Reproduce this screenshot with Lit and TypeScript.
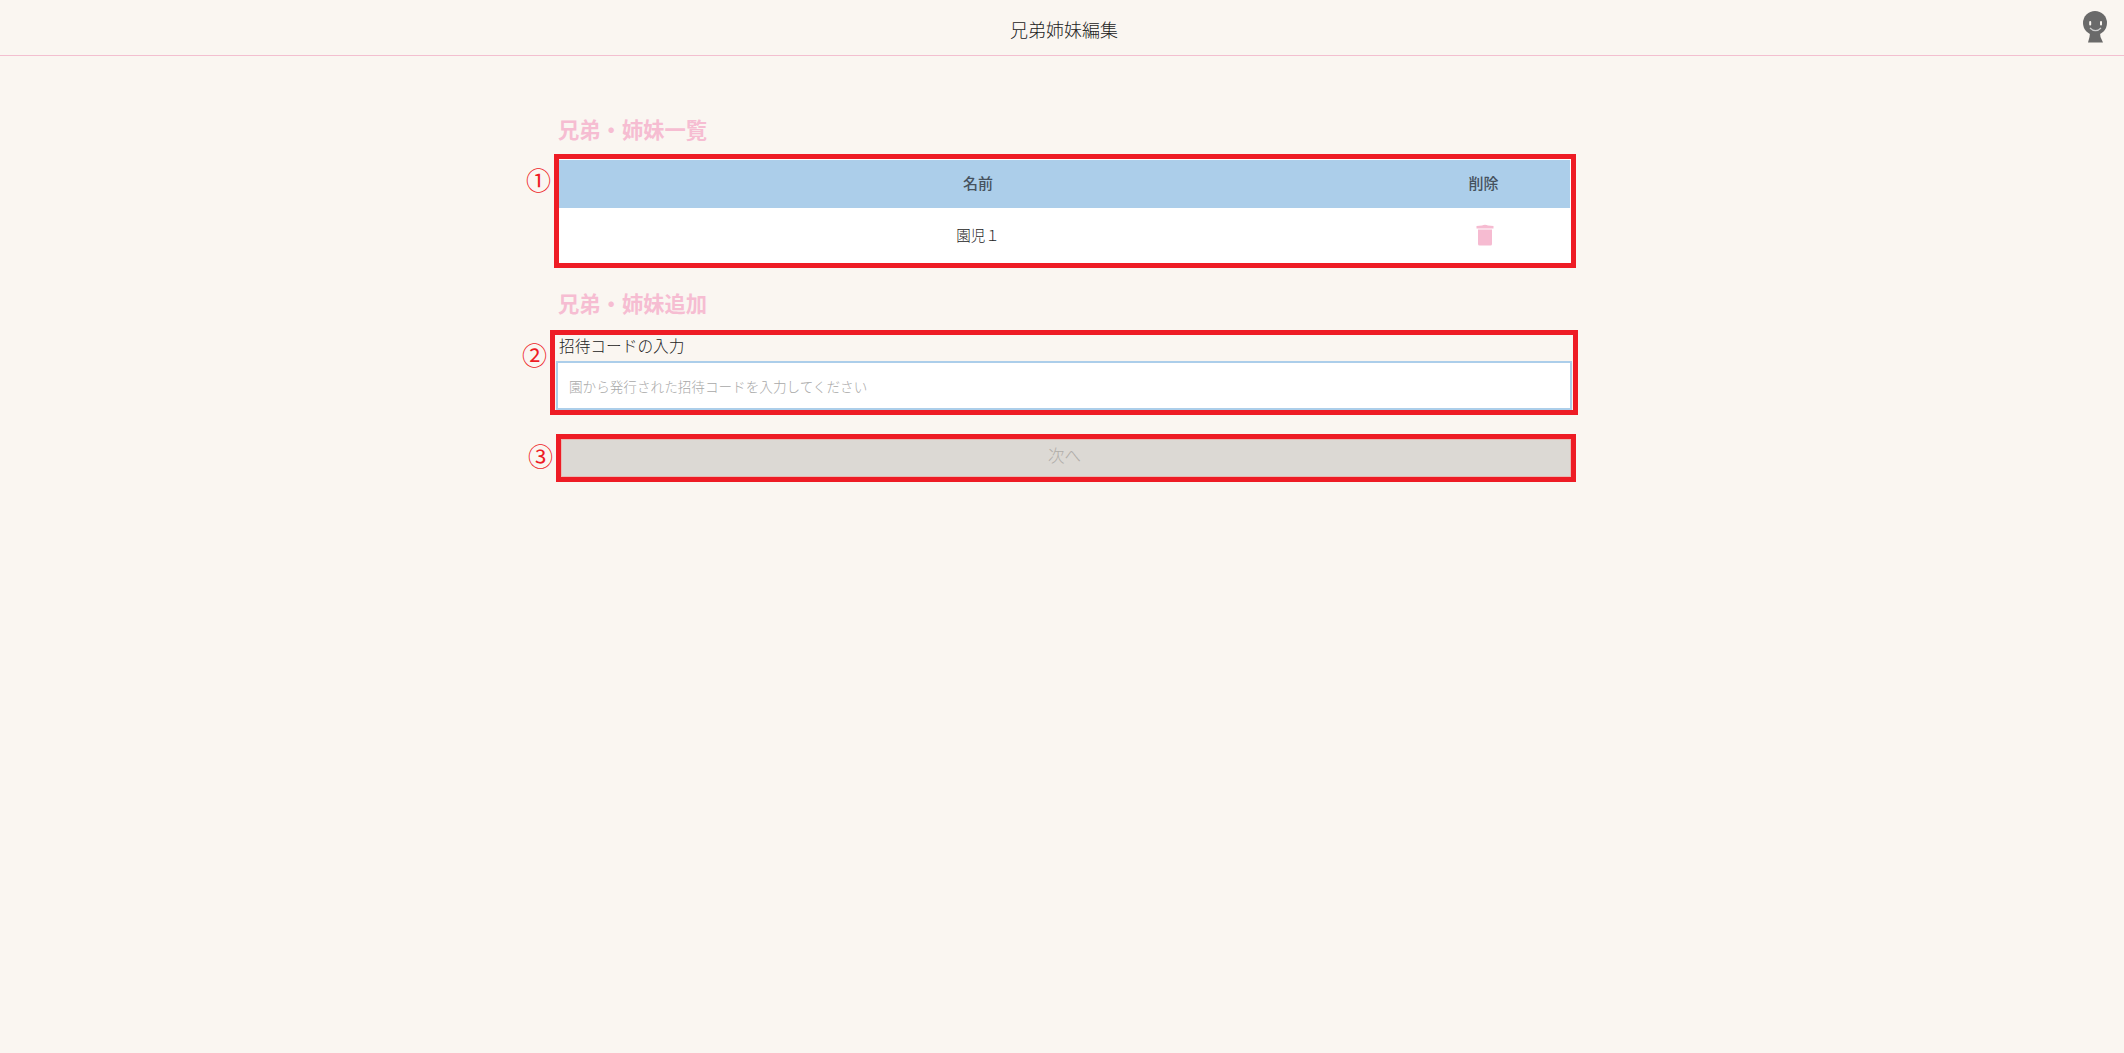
import { LitElement, html, css } from "lit";
import { customElement } from "lit/decorators.js";

@customElement("app-root")
export class AppRoot extends LitElement {
  static styles = css`
    :host {
      display: block;
      min-height: 1053px;
      background: #faf6f1;
      color: #222;
      font-family: "Noto Sans CJK JP", "Noto Sans", sans-serif;
      font-weight: 300;
    }
    .top {
      height: 56px;
      box-sizing: border-box;
      border-bottom: 1px solid #f3bfd0;
      display: flex;
      align-items: center;
      justify-content: center;
      position: relative;
      font-size: 18px;
      padding: 2px 0 0 4px;
    }
    .avatar {
      position: absolute;
      left: 2082px;
      top: 11px;
      width: 26px;
      height: 32px;
    }
    .main {
      width: 1012px;
      margin-left: 559px;
      display: flex;
      flex-direction: column;
    }
    h2 {
      margin: 0 0 0 -1px;
      font-size: 21.3px;
      font-weight: 700;
      line-height: 30px;
      color: #f6bdd2;
    }
    .h1st { margin-top: 58px; margin-bottom: 15px; }
    .h2nd { margin-top: 25px; margin-bottom: 17px; }
    .annotated { position: relative; }
    .frame {
      position: absolute;
      border: 5px solid #ee1c25;
      pointer-events: none;
    }
    .num {
      position: absolute;
      color: #ee1c25;
      font-size: 25px;
      line-height: 25px;
      font-weight: 400;
    }
    .table {
      background: #fff;
      padding: 1px 1px 0 0;
      height: 104px;
      box-sizing: border-box;
    }
    .row {
      display: grid;
      grid-template-columns: 838px 1fr;
      align-items: center;
      text-align: center;
      font-size: 14.5px;
    }
    .head {
      height: 48px;
      box-sizing: border-box;
      padding-bottom: 3px;
      background: #acceea;
      color: #46525e;
      font-weight: 500;
      font-size: 15px;
    }
    .body { height: 55px; box-sizing: border-box; padding-bottom: 3px; color: #222; }
    .trash { display: block; margin: 1px auto 0; width: 18px; height: 22px; transform: translateX(1px); }
    .label {
      font-size: 15.7px;
      line-height: 21px;
      height: 24px;
    }
    .field {
      margin: 2px 0 0 -3px;
      width: 1016px;
      height: 49px;
      box-sizing: border-box;
      border: 2px solid #acceea;
      background: #fff;
      display: flex;
      align-items: center;
      padding: 0 0 0 11px;
      font-size: 13.6px;
      color: #a8a8a8;
    }
    .btn-wrap { margin: 29px 0 0 2px; }
    .btn {
      width: 1010px;
      height: 38px;
      box-sizing: border-box;
      border: 1px solid #e8b9b4;
      padding: 0 3px 6px 0;
      background: #dcd9d4;
      color: #b0ada9;
      display: flex;
      align-items: center;
      justify-content: center;
      font-size: 16.5px;
    }
  `;

  render() {
    return html`
      <div class="top">
        兄弟姉妹編集
        <svg class="avatar" viewBox="0 0 26 32" aria-hidden="true">
          <circle cx="13" cy="12" r="12" fill="#6a6a6a" />
          <path fill="#6a6a6a" d="M8 22 H18 L18.5 26 L21 31.5 H6 L7.5 26 Z" />
          <rect x="7.2" y="10" width="2" height="4.5" rx="1" fill="#faf6f1" />
          <rect x="18" y="10" width="2" height="4.5" rx="1" fill="#faf6f1" />
          <path d="M8 17 Q13.5 22.5 19 17" fill="none" stroke="#cfcfcf" stroke-width="1.2" />
        </svg>
      </div>
      <div class="main">
        <h2 class="h1st">兄弟・姉妹一覧</h2>
        <div class="annotated">
          <div class="table">
            <div class="row head"><span>名前</span><span>削除</span></div>
            <div class="row body">
              <span>園児１</span>
              <svg class="trash" viewBox="0 0 18 22" aria-hidden="true">
                <path fill="#f6bbd1" d="M6 1.5 Q9 0 12 1.5 L17.5 2 V4.5 H0.5 V2 Z" />
                <path fill="#f6bbd1" d="M2 5.5 H16 V20 Q16 21.5 14.5 21.5 H3.5 Q2 21.5 2 20 Z" />
              </svg>
            </div>
          </div>
          <div class="frame" style="inset:-5px"></div>
          <span class="num" style="left:-33px;top:8px">①</span>
        </div>
        <h2 class="h2nd">兄弟・姉妹追加</h2>
        <div class="annotated">
          <div class="label">招待コードの入力</div>
          <div class="field">園から発行された招待コードを入力してください</div>
          <div class="frame" style="inset:-5px -7px -5px -9px"></div>
          <span class="num" style="left:-37px;top:7px">②</span>
        </div>
        <div class="annotated btn-wrap">
          <div class="btn">次へ</div>
          <div class="frame" style="inset:-5px"></div>
          <span class="num" style="left:-33px;top:4px">③</span>
        </div>
      </div>
    `;
  }
}
